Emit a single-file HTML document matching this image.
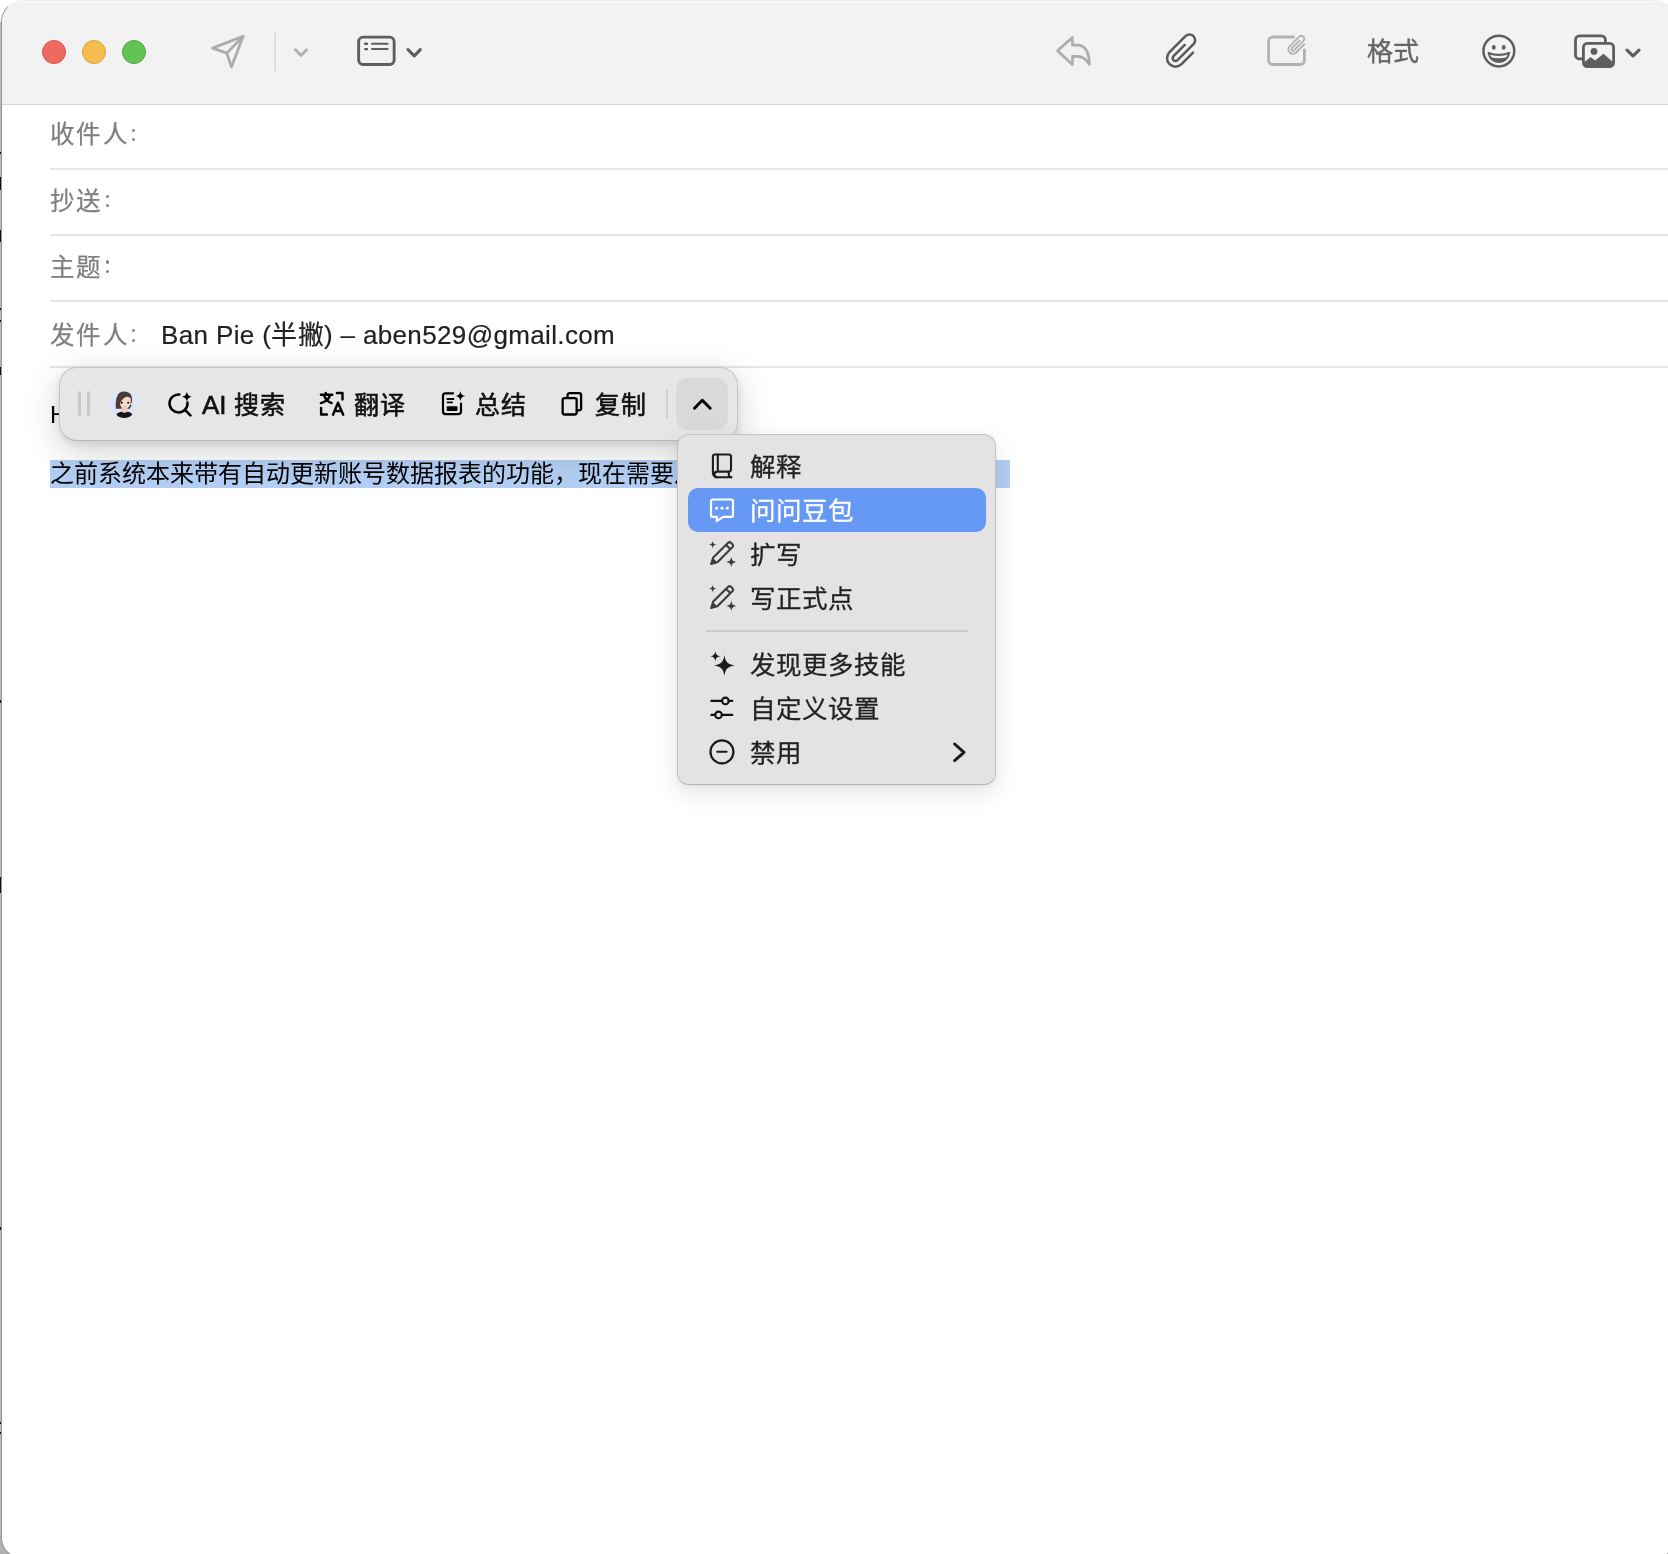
<!DOCTYPE html>
<html lang="zh-CN">
<head>
<meta charset="utf-8">
<style>
html,body{margin:0;padding:0;}
body{width:1668px;height:1554px;position:relative;overflow:hidden;background:#fff;font-family:"Liberation Sans",sans-serif;}
.a{position:absolute;}
.lbl{transform:translateZ(0);position:absolute;font-size:24.5px;letter-spacing:2.4px;line-height:30px;color:#7f7f7f;-webkit-text-stroke-width:0.25px;white-space:nowrap;}
.sep{position:absolute;left:50px;width:1640px;height:2px;background:#e6e6e6;}
.tb{transform:translateZ(0);position:absolute;font-size:25px;line-height:30px;color:#111;white-space:nowrap;-webkit-text-stroke-width:0.6px;letter-spacing:0.5px}
.mi{transform:translateZ(0);position:absolute;left:750px;font-size:25.5px;line-height:30px;color:#222;white-space:nowrap;-webkit-text-stroke-width:0.3px}
svg{overflow:visible;}
</style>
</head>
<body>
<div class="a" style="left:0;top:22px;width:1px;height:1532px;background:#b9b9b9"></div>
<div class="a" style="left:0;top:1536px;width:22px;height:18px;background:#b0b0b0"></div>
<div class="a" style="left:0;top:152px;width:1px;height:2px;background:#111"></div>
<div class="a" style="left:0;top:177px;width:1px;height:13px;background:#111"></div>
<div class="a" style="left:0;top:230px;width:1px;height:12px;background:#111"></div>
<div class="a" style="left:0;top:308px;width:1px;height:2px;background:#111"></div>
<div class="a" style="left:0;top:320px;width:1px;height:2px;background:#111"></div>
<div class="a" style="left:0;top:367px;width:1px;height:8px;background:#111"></div>
<div class="a" style="left:0;top:700px;width:1px;height:3px;background:#111"></div>
<div class="a" style="left:0;top:877px;width:1px;height:16px;background:#111"></div>
<div class="a" style="left:0;top:1227px;width:1px;height:3px;background:#111"></div>
<div class="a" style="left:0;top:1422px;width:1px;height:2px;background:#111"></div>
<div class="a" style="left:0;top:1432px;width:1px;height:2px;background:#111"></div>
<div class="a" style="left:1px;top:0;width:1675px;height:1558px;box-sizing:border-box;border:1px solid #969696;border-top-color:#ececec;border-radius:22px 22px 20px 20px;background:#fff;overflow:hidden">
  <div class="a" style="left:0;top:0;width:1675px;height:103px;background:#f2f2f2;border-bottom:1px solid #d8d8d8;box-shadow:inset 0 1px 0 #fafafa"></div>
</div>
<div class="a" style="left:42px;top:40px;width:22px;height:22px;border-radius:50%;background:#ee6a5e;border:1px solid #d8544a"></div>
<div class="a" style="left:82px;top:40px;width:22px;height:22px;border-radius:50%;background:#f5be4f;border:1px solid #dba23c"></div>
<div class="a" style="left:122px;top:40px;width:22px;height:22px;border-radius:50%;background:#61c454;border:1px solid #4fa840"></div>

<svg class="a" style="left:0;top:0" width="1668" height="104" viewBox="0 0 1668 104" fill="none" stroke-linecap="round" stroke-linejoin="round">
  <!-- send -->
  <path d="M243.2,36.2 L212.6,48.1 L226.8,53.1 L231.4,66.9 Z M226.8,53.1 L243.2,36.2" stroke="#acacac" stroke-width="2.8"/>
  <line x1="275" y1="32.5" x2="275" y2="71.5" stroke="#dedede" stroke-width="2" stroke-linecap="butt"/>
  <path d="M295.4,49.8 L301,55.4 L306.6,49.8" stroke="#b0b0b0" stroke-width="2.8"/>
  <!-- header fields icon -->
  <rect x="358.65" y="37.15" width="35.5" height="27.3" rx="4.5" stroke="#5e5e5e" stroke-width="2.9"/>
  <path d="M365.2,43.7 L367,43.7 M365.2,49.1 L367,49.1" stroke="#5e5e5e" stroke-width="2.4"/>
  <path d="M372,43.7 L387.6,43.7 M372,49.1 L387.6,49.1" stroke="#5e5e5e" stroke-width="2"/>
  <path d="M408,49.6 L414.3,55.8 L420.3,49.6" stroke="#5e5e5e" stroke-width="3.1"/>
  <!-- reply -->
  <path d="M1057.5,50.8 L1072.3,37.5 L1072.5,45.2 L1077,45.2 C1085.5,45.2 1089.3,53 1089.3,64.3 C1086,58.5 1081.5,56.3 1077,56.3 L1072.5,56.3 L1072.3,64.5 Z" stroke="#acacac" stroke-width="2.7"/>
  <!-- paperclip -->
  <path d="M1193.04,52.68 L1181.51,64.21 A8.5,8.5 0 0 1 1169.49,64.21 A8.5,8.5 0 0 1 1169.49,52.19 L1185.47,36.21 A5.65,5.65 0 0 1 1193.46,36.21 A5.65,5.65 0 0 1 1193.46,44.20 L1177.48,60.18 A2.8,2.8 0 0 1 1173.52,60.18 A2.8,2.8 0 0 1 1173.52,56.22 L1184.76,44.98" stroke="#5a5a5a" stroke-width="2.5"/>
  <!-- attach rect -->
  <path d="M1293.5,37 L1272.6,37 A4,4 0 0 0 1268.6,41 L1268.6,60.5 A4,4 0 0 0 1272.6,64.5 L1300.4,64.5 A4,4 0 0 0 1304.4,60.5 L1304.4,49.8" stroke="#b2b2b2" stroke-width="2.8"/>
  <path d="M1304.28,44.28 L1296.08,52.48 A4.5,4.5 0 0 1 1289.72,52.48 A4.5,4.5 0 0 1 1289.72,46.12 L1299.19,36.64 A3.00,3.00 0 0 1 1303.44,36.64 A3.00,3.00 0 0 1 1303.44,40.89 L1293.96,50.36 A1.5,1.5 0 0 1 1291.84,50.36 A1.5,1.5 0 0 1 1291.84,48.24 L1299.48,40.60" stroke="#b2b2b2" stroke-width="1.9"/>
  <!-- smiley -->
  <circle cx="1498.85" cy="51.05" r="15.4" stroke="#5e5e5e" stroke-width="2.5"/>
  <ellipse cx="1493.8" cy="47.4" rx="1.9" ry="2.4" fill="#5e5e5e" stroke="none"/>
  <ellipse cx="1503.7" cy="47.4" rx="1.9" ry="2.4" fill="#5e5e5e" stroke="none"/>
  <path d="M1488.6,52.9 Q1498.85,56.8 1509.1,52.9 C1508,58.8 1504,62 1498.85,62 C1493.7,62 1489.7,58.8 1488.6,52.9 Z" stroke="#5e5e5e" stroke-width="2.1"/>
  <path d="M1490.6,57.3 Q1498.85,59.2 1507.1,57.3 C1505.2,60.6 1502.3,62 1498.85,62 C1495.4,62 1492.5,60.6 1490.6,57.3 Z" fill="#5e5e5e" stroke="none"/>
  <!-- photos -->
  <path d="M1582,58.9 L1579.5,58.9 A4,4 0 0 1 1575.5,54.9 L1575.5,39.9 A4,4 0 0 1 1579.5,35.9 L1601.4,35.9 A4,4 0 0 1 1605.4,39.9 L1605.4,42" stroke="#5e5e5e" stroke-width="2.8"/>
  <rect x="1583.4" y="43.4" width="30.2" height="23.2" rx="4" stroke="#5e5e5e" stroke-width="2.8"/>
  <path d="M1584,62.5 L1590.5,57 L1595.1,60.5 L1603.5,53.8 L1613,62 L1613,63.5 A3,3 0 0 1 1610,66.5 L1587,66.5 A3,3 0 0 1 1584,63.5 Z" fill="#5e5e5e" stroke="none"/>
  <circle cx="1594" cy="51.4" r="3.4" fill="#5e5e5e" stroke="none"/>
  <path d="M1627,50.2 L1633,55.8 L1639,50.2" stroke="#5e5e5e" stroke-width="3.2"/>
</svg>
<div class="a" style="left:1367px;top:37px;font-size:26px;line-height:30px;color:#666;white-space:nowrap;-webkit-text-stroke-width:0.4px;transform:translateZ(0)">格式</div>

<div class="lbl" style="left:50px;top:120px">收件人</div>
<div class="a" style="left:131.7px;top:128.6px;width:3.2px;height:3.2px;border-radius:50%;background:#858585"></div><div class="a" style="left:131.7px;top:137.6px;width:3.2px;height:3.2px;border-radius:50%;background:#858585"></div><div class="a" style="left:106.0px;top:194.6px;width:3.2px;height:3.2px;border-radius:50%;background:#858585"></div><div class="a" style="left:106.0px;top:203.6px;width:3.2px;height:3.2px;border-radius:50%;background:#858585"></div><div class="a" style="left:106.0px;top:260.4px;width:3.2px;height:3.2px;border-radius:50%;background:#858585"></div><div class="a" style="left:106.0px;top:269.5px;width:3.2px;height:3.2px;border-radius:50%;background:#858585"></div><div class="a" style="left:131.7px;top:329.1px;width:3.2px;height:3.2px;border-radius:50%;background:#858585"></div><div class="a" style="left:131.7px;top:338.8px;width:3.2px;height:3.2px;border-radius:50%;background:#858585"></div>
<div class="sep" style="top:168px"></div>
<div class="lbl" style="left:50px;top:187px">抄送</div>
<div class="sep" style="top:234px"></div>
<div class="lbl" style="left:50px;top:253px">主题</div>
<div class="sep" style="top:300px"></div>
<div class="lbl" style="left:50px;top:321px">发件人</div>
<div class="a" style="left:161px;top:320px;font-size:26px;line-height:30px;color:#222;white-space:nowrap;transform:translateZ(0);letter-spacing:0.36px;-webkit-text-stroke-width:0.2px">Ban Pie (半撇) – aben529@gmail.com</div>
<div class="sep" style="top:366px"></div>

<div class="a" style="left:50px;top:401px;font-size:24px;line-height:28px;color:#000;transform:translateZ(0)">H</div>
<div class="a" style="left:50px;top:460px;width:960px;height:28px;background:#b3cef3"></div>
<div class="a" style="left:50px;top:460px;font-size:24px;line-height:28px;color:#000;white-space:nowrap;transform:translateZ(0)">之前系统本来带有自动更新账号数据报表的功能，现在需要从</div>

<div class="a" style="left:59px;top:367px;width:679px;height:74px;box-sizing:border-box;border-radius:18px;background:#e6e6e6;border:1px solid #c6c6c6;border-bottom-color:#b8b8b8;box-shadow:0 3px 8px rgba(0,0,0,0.09),0 10px 34px rgba(0,0,0,0.19)"></div>
<div class="a" style="left:78px;top:391px;width:3px;height:25px;border-radius:2px;background:#c7c7c7"></div>
<div class="a" style="left:87px;top:391px;width:3px;height:25px;border-radius:2px;background:#c7c7c7"></div>
<div class="tb" style="left:202px;top:390px;font-size:26px;letter-spacing:0">AI</div><div class="tb" style="left:234px;top:390px">搜索</div>
<div class="tb" style="left:354px;top:390px">翻译</div>
<div class="tb" style="left:475px;top:390px">总结</div>
<div class="tb" style="left:595px;top:390px">复制</div>
<div class="a" style="left:666px;top:390px;width:2px;height:28px;background:#cfcfcf"></div>
<div class="a" style="left:676px;top:378px;width:52px;height:52px;border-radius:12px;background:#d9d9d9"></div>

<svg class="a" style="left:0;top:0" width="760" height="450" viewBox="0 0 760 450" fill="none" stroke-linecap="round" stroke-linejoin="round">
  <!-- avatar -->
  <circle cx="123.9" cy="403.9" r="13.9" fill="#dbe6fb"/>
  <path d="M115.8,408.8 C115.3,401 116.5,395 120,392.6 C123,390.8 128.5,391.2 130.8,394.5 C132.4,397 132.2,402 131.2,406 L129.8,408.8 L128.5,408.8 L120,408.8 Z" fill="#4c3b34"/>
  <path d="M121.6,406 L121.6,412.5 Q124.5,414.5 127.4,412.5 L127.4,406 Z" fill="#eec9bd"/>
  <path d="M116.4,414.6 C117.5,412.6 120,412 121.6,411.8 Q124.5,414 127.4,411.8 C129.5,412 131.5,412.8 132.3,414.6 C131,417 127.5,418 124.4,418 C121,418 117.5,417 116.4,414.6 Z" fill="#141414"/>
  <path d="M119.4,399 C119.2,405 121.5,408.8 125.1,408.8 C128.8,408.8 131,405 130.8,399 C130.5,396.5 128.5,395.5 125.3,395.5 C122,395.5 119.7,396.5 119.4,399 Z" fill="#f4d9cf"/>
  <path d="M118.3,405 C118,398.5 120.5,393.8 125,393.6 C128.3,393.5 130.6,395.2 131,398.8 C129.8,397.2 128,396.5 126.2,396.9 C123.5,397.6 120.8,400.5 119.6,405.2 Z" fill="#4c3b34"/>
  <circle cx="131.5" cy="404.1" r="1.3" fill="#efc7ba"/>
  <ellipse cx="121.8" cy="402.8" rx="1.15" ry="1.05" fill="#262020"/>
  <ellipse cx="128.2" cy="402.8" rx="1.15" ry="1.05" fill="#262020"/>
  <ellipse cx="125.1" cy="406.9" rx="0.9" ry="0.6" fill="#de9e95"/>
  <!-- search sparkle -->
  <path d="M179.45,394.45 A9,9 0 1 0 187.47,402.6" stroke="#000" stroke-width="2.5"/>
  <path d="M185.6,410.5 L190.4,415.3" stroke="#000" stroke-width="2.5"/>
  <path d="M186.90,391.70 C187.60,394.90 188.70,396.00 191.90,396.70 C188.70,397.40 187.60,398.50 186.90,401.70 C186.20,398.50 185.10,397.40 181.90,396.70 C185.10,396.00 186.20,394.90 186.90,391.70 Z" fill="#000"/>
  <!-- translate -->
  <path d="M320.9,394.8 L332.3,394.8 M325.8,393 L326.4,394.8 M324,395.5 Q326.5,401.5 331.6,403.1 M330.2,395.5 Q327.5,401.5 320.9,403.1" stroke="#000" stroke-width="2.4"/>
  <path d="M336.9,393 L342.5,393 L342.5,399.4 M321.1,407.9 L321.1,414.5 L327,414.5" stroke="#000" stroke-width="2.4"/>
  <path d="M333,414.7 L338,402.7 L343.2,414.7 M335.3,411 L340.8,411" stroke="#000" stroke-width="2.4"/>
  <!-- summary -->
  <path d="M453.1,393.3 L445.5,393.3 A2.5,2.5 0 0 0 443,395.8 L443,411.6 A2.5,2.5 0 0 0 445.5,414.1 L458.5,414.1 A2.5,2.5 0 0 0 461,411.6 L461,403.6" stroke="#000" stroke-width="2.2"/>
  <path d="M447.4,399.1 L453.4,399.1" stroke="#000" stroke-width="2"/>
  <path d="M447.4,402.4 L452.2,402.4" stroke="#000" stroke-width="1.6"/>
  <rect x="446.7" y="406.2" width="10.8" height="4.7" rx="1" fill="#000"/>
  <path d="M460.40,390.90 C461.00,394.27 462.10,395.39 465.40,396.00 C462.10,396.61 461.00,397.73 460.40,401.10 C459.80,397.73 458.70,396.61 455.40,396.00 C458.70,395.39 459.80,394.27 460.40,390.90 Z" fill="#000"/>
  <!-- copy -->
  <path d="M567.5,397.5 L567.5,395.2 A2,2 0 0 1 569.5,393.15 L579.1,393.15 A2,2 0 0 1 581.1,395.15 L581.1,408.3 A2,2 0 0 1 579.1,410.3 L577.2,410.3" stroke="#000" stroke-width="2.3"/>
  <rect x="562.65" y="398.05" width="14" height="16.45" rx="2" stroke="#000" stroke-width="2.3"/>
  <!-- chevron up -->
  <path d="M694.5,408.3 L702.3,400.2 L710.2,408.3" stroke="#000" stroke-width="2.9"/>
</svg>

<div class="a" style="left:677px;top:434px;width:319px;height:351px;box-sizing:border-box;border-radius:12px;background:#e3e3e3;border:1px solid #c2c2c2;border-bottom-color:#b4b4b4;box-shadow:0 2px 4px rgba(0,0,0,0.06),0 8px 24px rgba(0,0,0,0.11)"></div>
<div class="a" style="left:688px;top:488px;width:298px;height:44px;border-radius:10px;background:#6599f5"></div>
<div class="mi" style="top:452px">解释</div>
<div class="mi" style="top:496px;color:#fff">问问豆包</div>
<div class="mi" style="top:540px">扩写</div>
<div class="mi" style="top:584px">写正式点</div>
<div class="a" style="left:706px;top:630px;width:262px;height:2px;background:#c9c9c9"></div>
<div class="mi" style="top:650px">发现更多技能</div>
<div class="mi" style="top:694px">自定义设置</div>
<div class="mi" style="top:738px">禁用</div>

<svg class="a" style="left:0;top:0" width="1000" height="790" viewBox="0 0 1000 790" fill="none" stroke-linecap="round" stroke-linejoin="round">
  <!-- book -->
  <path d="M731,469 L731,456.6 A2.1,2.1 0 0 0 728.9,454.5 L715,454.5 A2.1,2.1 0 0 0 712.9,456.6 L712.9,473 A4.3,4.3 0 0 0 717.2,477.3 L731.3,477.3" stroke="#1c1c1c" stroke-width="2.1"/>
  <path d="M717.8,454.5 L717.8,471.6 M717.4,471.6 L728.6,471.6 A2.4,2.4 0 0 0 731,469.2 M717.3,471.6 A2.85,2.85 0 0 0 717.3,477.3 M728.8,471.8 L728.8,474.6 A2.7,2.7 0 0 0 731.3,477.3" stroke="#1c1c1c" stroke-width="2.1"/>
  <!-- chat (white) -->
  <path d="M716.9,516.9 L713,516.9 A2,2 0 0 1 711,514.9 L711,501.5 A2,2 0 0 1 713,499.5 L731,499.5 A2,2 0 0 1 733,501.5 L733,514.9 A2,2 0 0 1 731,516.9 L723.2,516.9 L716.7,521.2 Z" stroke="#fff" stroke-width="2.2"/>
  <circle cx="716.5" cy="508.2" r="1.45" fill="#fff"/>
  <circle cx="722" cy="508.2" r="1.45" fill="#fff"/>
  <circle cx="727.4" cy="508.2" r="1.45" fill="#fff"/>
  <!-- pencil sparkle x2 -->
  <g transform="translate(710.8,564.4) rotate(-45)">
    <path d="M6.2,-3.1 L27.3,-3.1 Q29.6,-3.1 29.6,-0.8 L29.6,0.8 Q29.6,3.1 27.3,3.1 L6.2,3.1 M24.6,-3.1 L24.6,3.1" stroke="#3c3c3c" stroke-width="2.1"/>
    <path d="M0.3,0 L5.2,-2.6 L5.2,2.6 Z" fill="#3c3c3c" stroke="#3c3c3c" stroke-width="1.8"/>
  </g>
  <path d="M712.70,540.70 C713.09,543.43 713.87,544.21 716.60,544.60 C713.87,544.99 713.09,545.77 712.70,548.50 C712.31,545.77 711.53,544.99 708.80,544.60 C711.53,544.21 712.31,543.43 712.70,540.70 Z" fill="#3c3c3c"/>
  <path d="M731.30,556.50 C731.84,560.28 732.92,561.36 736.70,561.90 C732.92,562.44 731.84,563.52 731.30,567.30 C730.76,563.52 729.68,562.44 725.90,561.90 C729.68,561.36 730.76,560.28 731.30,556.50 Z" fill="#3c3c3c"/>
  <g transform="translate(0,44)">
  <g transform="translate(710.8,564.4) rotate(-45)">
    <path d="M6.2,-3.1 L27.3,-3.1 Q29.6,-3.1 29.6,-0.8 L29.6,0.8 Q29.6,3.1 27.3,3.1 L6.2,3.1 M24.6,-3.1 L24.6,3.1" stroke="#3c3c3c" stroke-width="2.1"/>
    <path d="M0.3,0 L5.2,-2.6 L5.2,2.6 Z" fill="#3c3c3c" stroke="#3c3c3c" stroke-width="1.8"/>
  </g>
  <path d="M712.70,540.70 C713.09,543.43 713.87,544.21 716.60,544.60 C713.87,544.99 713.09,545.77 712.70,548.50 C712.31,545.77 711.53,544.99 708.80,544.60 C711.53,544.21 712.31,543.43 712.70,540.70 Z" fill="#3c3c3c"/>
  <path d="M731.30,556.50 C731.84,560.28 732.92,561.36 736.70,561.90 C732.92,562.44 731.84,563.52 731.30,567.30 C730.76,563.52 729.68,562.44 725.90,561.90 C729.68,561.36 730.76,560.28 731.30,556.50 Z" fill="#3c3c3c"/>
  </g>
  <!-- sparkles -->
  <path d="M715.35,651.00 C715.87,654.64 716.91,655.68 720.55,656.20 C716.91,656.72 715.87,657.76 715.35,661.40 C714.83,657.76 713.79,656.72 710.15,656.20 C713.79,655.68 714.83,654.64 715.35,651.00 Z" fill="#1c1c1c"/>
  <path d="M724.40,655.10 C725.44,662.17 727.73,664.46 734.80,665.50 C727.73,666.54 725.44,668.83 724.40,675.90 C723.36,668.83 721.07,666.54 714.00,665.50 C721.07,664.46 723.36,662.17 724.40,655.10 Z" fill="#1c1c1c"/>
  <!-- sliders -->
  <path d="M711.4,700.9 L722,700.9 M728.8,700.9 L732.3,700.9 M711.4,714.9 L715.1,714.9 M721.9,714.9 L732.3,714.9" stroke="#111" stroke-width="2.2"/>
  <circle cx="725.4" cy="700.9" r="3.3" stroke="#111" stroke-width="2.1"/>
  <circle cx="718.5" cy="714.9" r="3.3" stroke="#111" stroke-width="2.1"/>
  <!-- minus circle -->
  <circle cx="721.95" cy="751.8" r="11.5" stroke="#1a1a1a" stroke-width="2.2"/>
  <path d="M717.2,751.8 L726.6,751.8" stroke="#1a1a1a" stroke-width="2.1"/>
  <!-- chevron right -->
  <path d="M954.6,744 L964,752.3 L954.6,760.6" stroke="#1a1a1a" stroke-width="3"/>
</svg>
</body>
</html>
